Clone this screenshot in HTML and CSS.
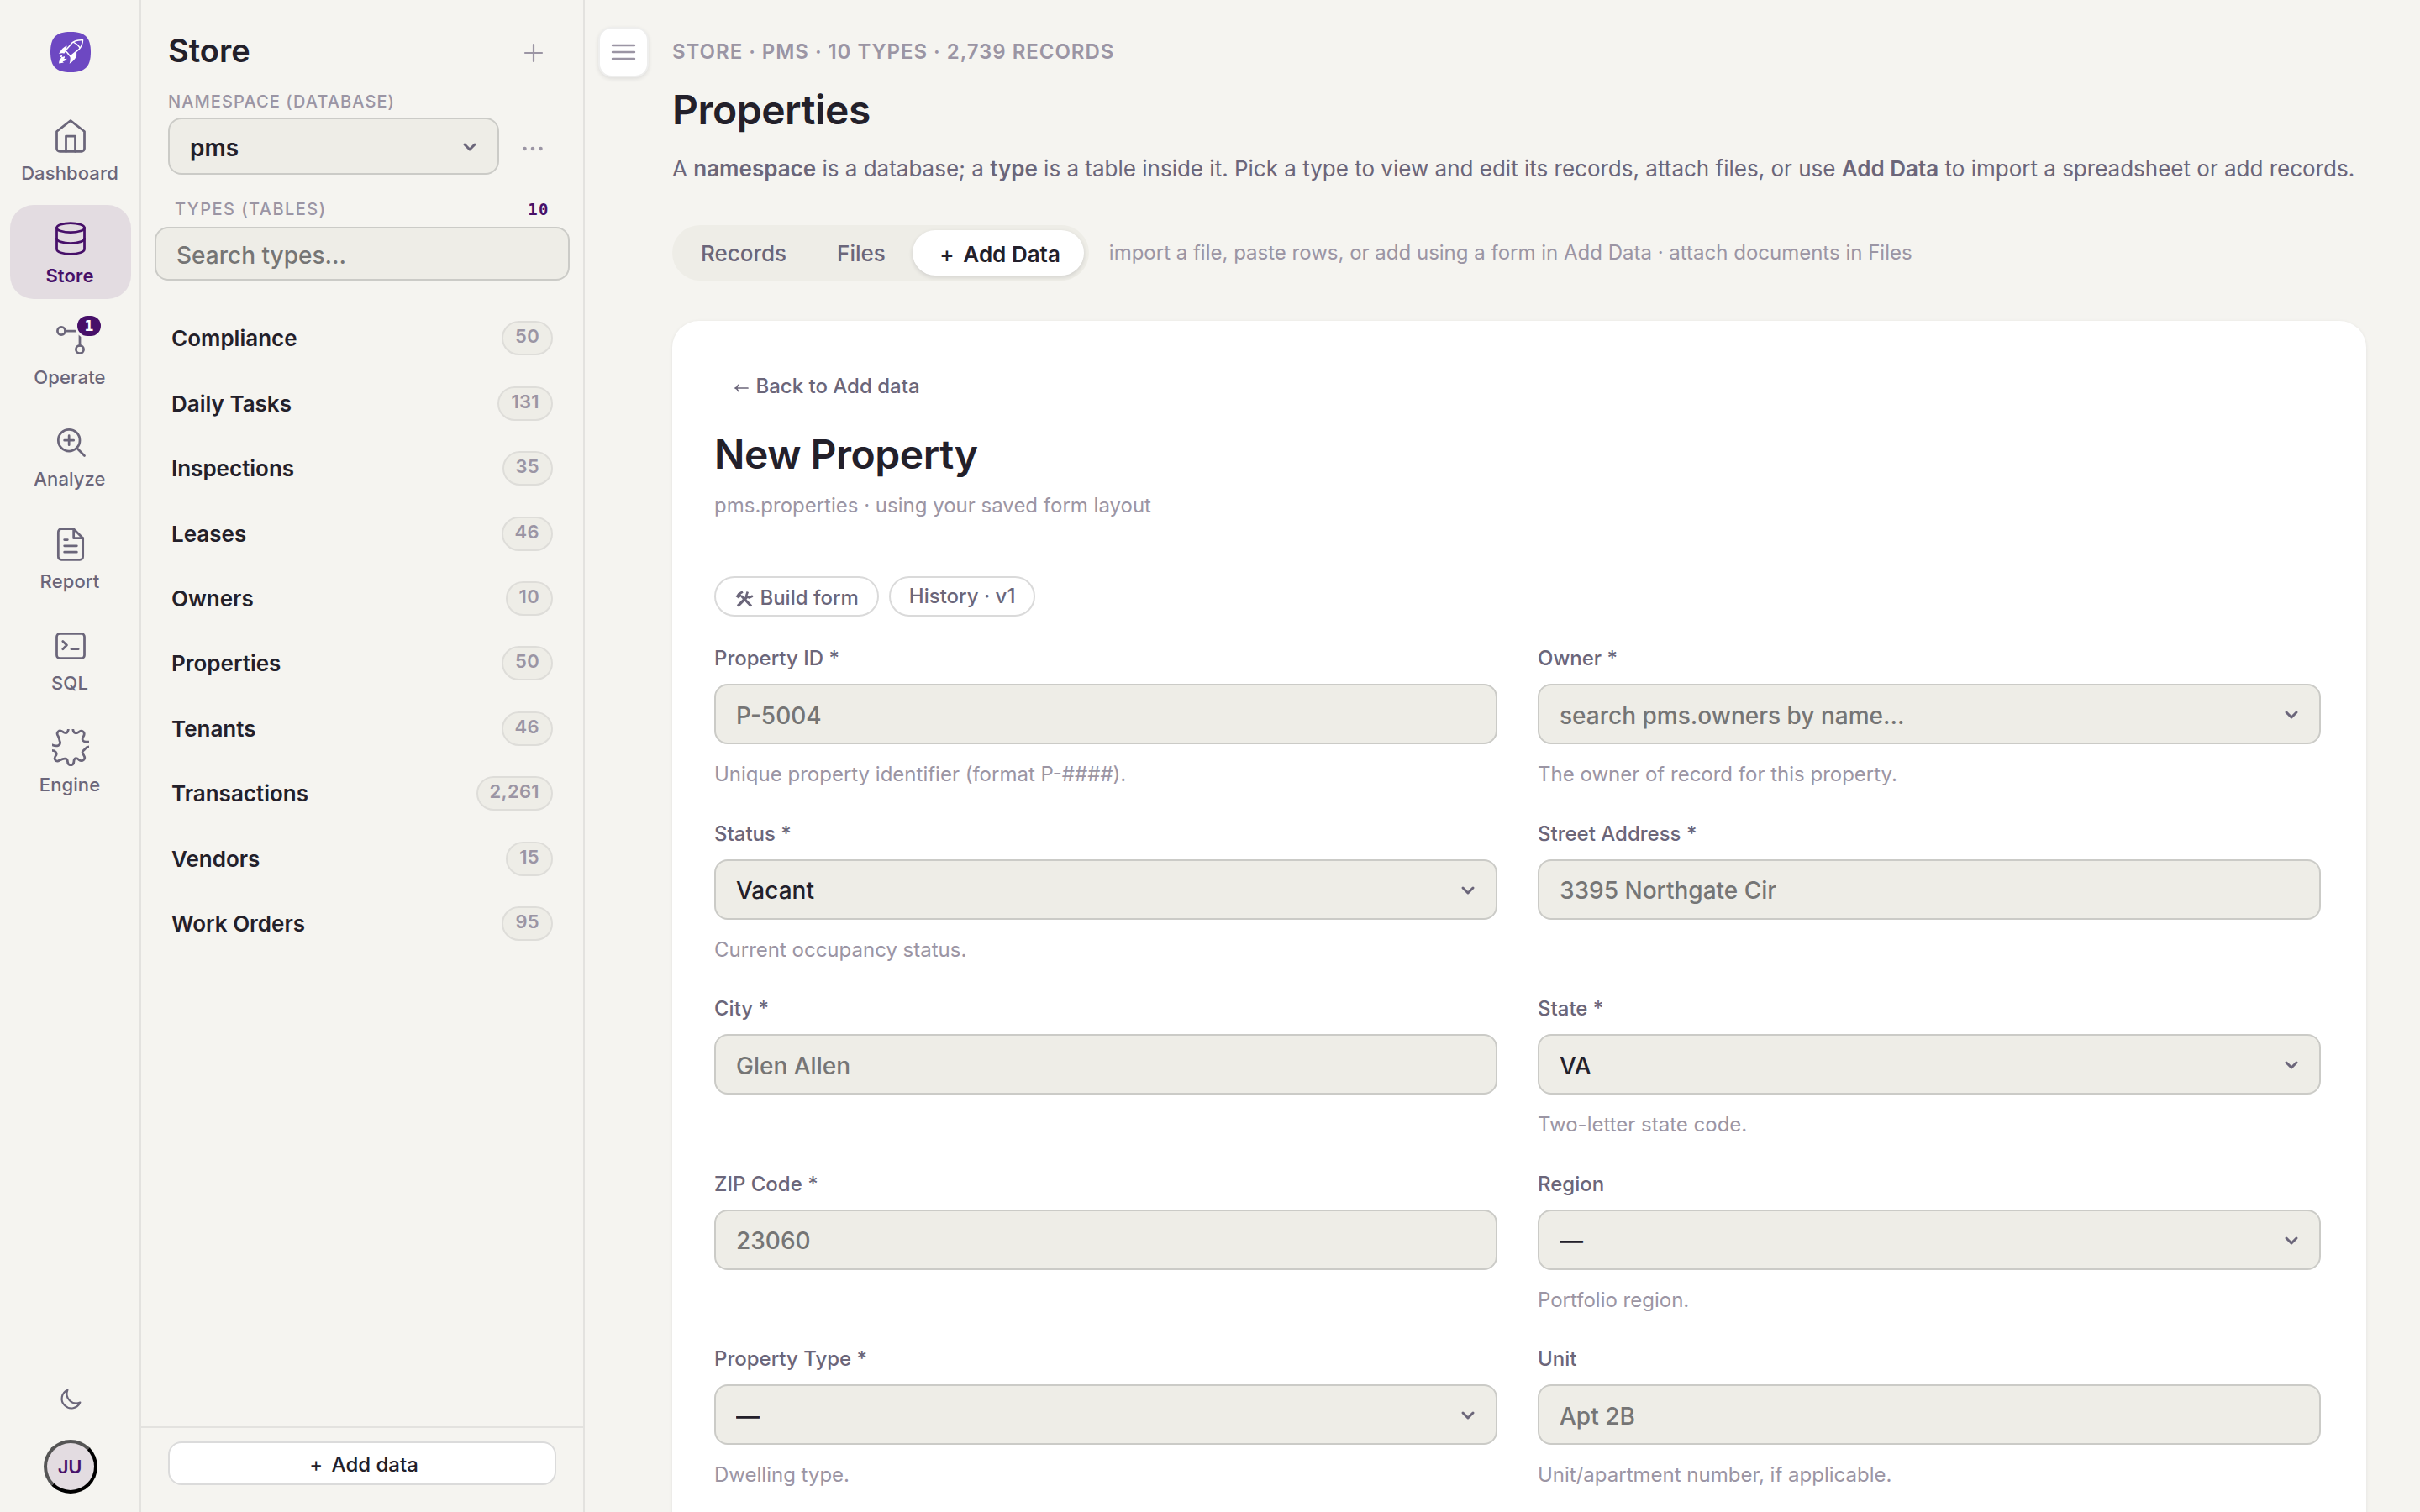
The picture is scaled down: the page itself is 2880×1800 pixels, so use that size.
FILE: index.html
```html
<!DOCTYPE html>
<html lang="en">
<head>
<meta charset="UTF-8">
<meta name="viewport" content="width=device-width, initial-scale=1">
<title>Store · Properties</title>
<link rel="stylesheet" href="styles.css">
</head>
<body>
<div class="app">

  <!-- icon rail -->
  <nav class="rail">
    <svg class="logo" viewBox="0 0 142 142">
      <path fill="#6d48c2" d="M71 0C122 0 142 20 142 71S122 142 71 142 0 122 0 71 20 0 71 0z"/>
      <path fill="none" stroke="#fff" stroke-width="4.5" stroke-linejoin="round" d="M114 29C98 28 86 31 78 37L53 66l17 20 30-24c9-9 13-19 14-33zM80 36c8 4 20 12 24 21"/>
      <path fill="#fff" d="M58 49c-10 3-21 14-28 28 7-3 13-3 18-1l7-9zM92 70l-23 16c2 9 1 16-2 26 11-6 21-17 25-27zM44 79c-5 2-9 5-10 9l5 2c-6 6-9 12-9 21 7-1 12-2 17-3l-4-4c8-1 13-5 15-10-5 1-8 1-10 0 3-3 3-6 1-8-3 2-6 2-9 1z"/>
    </svg>
    <a class="nav-item">
      <svg class="icon" viewBox="0 0 24 24"><path d="M3 9l9-7 9 7v11a2 2 0 0 1-2 2H5a2 2 0 0 1-2-2z"/><path d="M9 22V12h6v10"/></svg>
      <span>Dashboard</span>
    </a>
    <a class="nav-item active">
      <svg class="icon" viewBox="0 0 24 24"><ellipse cx="12" cy="5" rx="9" ry="3"/><path d="M21 12c0 1.66-4 3-9 3s-9-1.34-9-3"/><path d="M3 5v14c0 1.66 4 3 9 3s9-1.34 9-3V5"/></svg>
      <span>Store</span>
    </a>
    <a class="nav-item">
      <svg class="icon" viewBox="0 0 24 24"><circle cx="6" cy="6" r="2.5"/><circle cx="18" cy="18" r="2.5"/><path d="M8.5 6H16a2 2 0 0 1 2 2v7.5"/></svg>
      <b class="nav-badge">1</b>
      <span>Operate</span>
    </a>
    <a class="nav-item">
      <svg class="icon" viewBox="0 0 24 24"><circle cx="11" cy="11" r="7"/><path d="M21 21l-5-5M11 8v6M8 11h6"/></svg>
      <span>Analyze</span>
    </a>
    <a class="nav-item">
      <svg class="icon" viewBox="0 0 24 24"><path d="M14 2H6a2 2 0 0 0-2 2v16a2 2 0 0 0 2 2h12a2 2 0 0 0 2-2V8z"/><path d="M14 2v6h6M16 13H8M16 17H8M10 9H8"/></svg>
      <span>Report</span>
    </a>
    <a class="nav-item">
      <svg class="icon" viewBox="0 0 24 24"><rect x="3" y="4" width="18" height="16" rx="2"/><path d="M7 9l2.5 2.5L7 14M12.5 14H17"/></svg>
      <span>SQL</span>
    </a>
    <a class="nav-item">
      <svg class="icon" viewBox="0 0 24 24"><path d="M10.6-.5C10.4 3 8.6 3 6.9 1.7 4.6 0 2.3 2.2 3.9 4.5 4.8 6 4.6 7.2 5.2 8.4 5.6 10.2 3.5 11.8 0 10.2M-.2 13.9C2 13.9 3.4 15.2 2.6 17 .6 19.2 2.4 21.8 5 20.2 8 18.6 10 18.8 10.1 21.3 10.2 24 14 24 14.1 21.3 14.2 18.8 15.6 18.2 17.3 19.8 19.6 21.6 22.2 19.4 20.6 17 19 15 19.6 14.4 21.3 13 22 12 23 11.5 24.5 11.4M24.5 8.2H22C20 8.2 19.2 7 20.1 5.2 22 2.4 19.8 .2 17.4 1.8 15.6 3.2 13.6 3 13.5-.5"/></svg>
      <span>Engine</span>
    </a>
    <div class="rail-foot">
      <svg class="moon" viewBox="0 0 24 24"><path d="M20 14.5A8 8 0 0 1 9.5 4a8 8 0 1 0 10.5 10.5z"/></svg>
      <button class="avatar">JU</button>
    </div>
  </nav>

  <!-- types panel -->
  <aside class="panel">
    <div class="panel-head">
      <h2>Store</h2>
      <svg class="plus" viewBox="0 0 24 24"><path d="M12 2v20M2 12h20"/></svg>
    </div>
    <div class="ns-label">Namespace (database)</div>
    <div class="ns-row">
      <div class="select-wrap ns-select">
        <select><option>pms</option></select>
        <svg class="chev" viewBox="0 0 12 12"><path d="M3 4.5l3 3 3-3"/></svg>
      </div>
      <svg class="dots" viewBox="0 0 24 6"><circle cx="2.5" cy="3" r="2.3"/><circle cx="12" cy="3" r="2.3"/><circle cx="21.5" cy="3" r="2.3"/></svg>
    </div>
    <div class="types-head"><span>Types (tables)</span><b>10</b></div>
    <input class="search" placeholder="Search types…">
    <ul class="types">
      <li>Compliance<span>50</span></li>
      <li>Daily Tasks<span>131</span></li>
      <li>Inspections<span>35</span></li>
      <li>Leases<span>46</span></li>
      <li>Owners<span>10</span></li>
      <li>Properties<span>50</span></li>
      <li>Tenants<span>46</span></li>
      <li>Transactions<span>2,261</span></li>
      <li>Vendors<span>15</span></li>
      <li>Work Orders<span>95</span></li>
    </ul>
    <div class="panel-foot">
      <button class="add-btn"><i class="wide">+</i> Add data</button>
    </div>
  </aside>

  <main class="main">
    <button class="menu-btn">
      <svg viewBox="0 0 32 32"><path d="M3 8h26M3 16h26M3 24h26"/></svg>
    </button>
    <div class="content">
      <div class="eyebrow">Store · pms · 10 types · 2,739 records</div>
      <h1>Properties</h1>
      <p class="desc">A <b>namespace</b> is a database; a <b>type</b> is a table inside it. Pick a type to view and edit its records, attach files, or use <b>Add Data</b> to import a spreadsheet or add records.</p>
      <div class="tab-row">
        <div class="tabs">
          <button>Records</button>
          <button>Files</button>
          <button class="on"><i class="wide">+</i> Add Data</button>
        </div>
        <span class="tab-hint">import a file, paste rows, or add using a form in Add Data · attach documents in Files</span>
      </div>

      <section class="card">
        <a class="back"><svg class="arrow" viewBox="0 0 19 12"><path d="M1 6h15M4.5 2.5C3.8 4.3 2.8 5.4 1 6c1.8.6 2.8 1.7 3.5 3.5"/></svg> Back to Add data</a>
        <h1 class="card-title">New Property</h1>
        <p class="sub">pms.properties · using your saved form layout</p>
        <div class="actions">
          <button class="build"><svg class="tool" viewBox="0 0 24 20">
            <path stroke-width="3.2" d="M8.5 6.5L20 18.5M4 18.5L15.5 7"/>
            <path stroke-width="2.6" d="M2.8 8l2.400-3.800L10 1.500M4 8.500L8 5M15.800 1.500l-1.500 4.400 3.200 2.600 4.300-2"/>
          </svg> Build form</button>
          <button>History · v1</button>
        </div>
        <form class="fields">
          <div class="field">
            <label>Property ID *</label>
            <input placeholder="P-5004">
            <small>Unique property identifier (format P-####).</small>
          </div>
          <div class="field">
            <label>Owner *</label>
            <div class="select-wrap">
              <input placeholder="search pms.owners by name…">
              <svg class="chev" viewBox="0 0 12 12"><path d="M3 4.5l3 3 3-3"/></svg>
            </div>
            <small>The owner of record for this property.</small>
          </div>
          <div class="field">
            <label>Status *</label>
            <div class="select-wrap">
              <select><option>Vacant</option></select>
              <svg class="chev" viewBox="0 0 12 12"><path d="M3 4.5l3 3 3-3"/></svg>
            </div>
            <small>Current occupancy status.</small>
          </div>
          <div class="field">
            <label>Street Address *</label>
            <input placeholder="3395 Northgate Cir">
          </div>
          <div class="field">
            <label>City *</label>
            <input placeholder="Glen Allen">
          </div>
          <div class="field">
            <label>State *</label>
            <div class="select-wrap">
              <select><option>VA</option></select>
              <svg class="chev" viewBox="0 0 12 12"><path d="M3 4.5l3 3 3-3"/></svg>
            </div>
            <small>Two-letter state code.</small>
          </div>
          <div class="field">
            <label>ZIP Code *</label>
            <input placeholder="23060">
          </div>
          <div class="field">
            <label>Region</label>
            <div class="select-wrap">
              <select><option>—</option></select>
              <svg class="chev" viewBox="0 0 12 12"><path d="M3 4.5l3 3 3-3"/></svg>
            </div>
            <small>Portfolio region.</small>
          </div>
          <div class="field">
            <label>Property Type *</label>
            <div class="select-wrap">
              <select><option>—</option></select>
              <svg class="chev" viewBox="0 0 12 12"><path d="M3 4.5l3 3 3-3"/></svg>
            </div>
            <small>Dwelling type.</small>
          </div>
          <div class="field">
            <label>Unit</label>
            <input placeholder="Apt 2B">
            <small>Unit/apartment number, if applicable.</small>
          </div>
        </form>
      </section>
    </div>
  </main>
</div>
</body>
</html>
```
FILE: styles.css
```css
:root {
  --bg: #f5f4f0;
  --sunken: #eeede7;
  --line: #e3e2df;
  --line-strong: #cbcbc7;
  --ink: #23202a;
  --muted: #6b667a;
  --faint: #9b95a4;
  --brand: #471069;
  --brand-soft: #e3dce1;
}
* { box-sizing: border-box; margin: 0; padding: 0; }
body {
  background: var(--bg);
  color: var(--ink);
  font-family: Inter, "Liberation Sans", sans-serif;
  font-size: 26px;
  overflow: hidden;
}
button, input, select { font: inherit; color: inherit; }
i { font-style: normal; }
svg { fill: none; stroke: currentColor; stroke-linecap: round; stroke-linejoin: round; flex: none; }
.app { display: flex; height: 100vh; overflow: hidden; }

/* rail */
.rail {
  width: 168px;
  flex: none;
  border-right: 2px solid var(--line);
  display: flex;
  flex-direction: column;
  padding: 38px 10px 22px 12px;
  color: var(--muted);
}
.logo { width: 48px; height: 48px; stroke: none; margin: 0 0 36.4px 48px; }
.nav-item {
  position: relative;
  height: 112px;
  margin-bottom: 9.3px;
  padding-top: 18px;
  border-radius: 28px;
  display: flex;
  flex-direction: column;
  align-items: center;
  gap: 6px;
  font-size: 22px;
  line-height: 32px;
  font-weight: 500;
  letter-spacing: .005em;
}
.nav-item span { margin-right: 2px; }
.nav-item.active { background: var(--brand-soft); color: var(--brand); font-weight: 600; }
.icon { width: 44px; height: 44px; stroke-width: 1.5; }
.nav-badge {
  position: absolute;
  left: 80px;
  top: 11px;
  width: 28px;
  height: 24px;
  border-radius: 12px;
  background: var(--brand);
  color: #fff;
  box-shadow: 0 0 0 3px var(--bg);
  font: 700 18px/24px "DejaVu Sans Mono", monospace;
  text-align: center;
}
.rail-foot { margin-top: auto; display: flex; flex-direction: column; align-items: center; gap: 31px; }
.moon { width: 34px; height: 34px; stroke-width: 1.5; }
.avatar {
  width: 64px;
  height: 64px;
  padding-right: 2px;
  border-radius: 50%;
  border: 4px solid;
  border-color: #555 #000 #000 #555;
  background: var(--brand-soft);
  color: var(--brand);
  font-size: 22px;
  font-weight: 600;
  letter-spacing: -.01em;
}

/* types panel */
.panel {
  width: 528px;
  flex: none;
  border-right: 2px solid var(--line);
  display: flex;
  flex-direction: column;
}
.panel-head { display: flex; justify-content: space-between; align-items: center; height: 48px; margin: 36px 48px 0 32px; }
.panel-head h2 { font-size: 38px; font-weight: 600; line-height: 48px; }
.plus { width: 24px; height: 24px; stroke-width: 2.2; color: var(--faint); margin: 6px -1px 0 0; }
.ns-label, .types-head {
  font-size: 20px;
  line-height: 30px;
  font-weight: 500;
  letter-spacing: .055em;
  text-transform: uppercase;
  color: var(--faint);
}
.ns-label { margin: 22px 0 4px 32px; }
.ns-row { display: flex; align-items: center; gap: 28px; margin-left: 32px; }
.ns-select { width: 394px; }
.ns-select select { height: 68px; padding-top: 4px; font-weight: 600; }
.dots { width: 24px; height: 6px; margin-top: 6px; fill: var(--faint); stroke: none; }
.types-head { display: flex; justify-content: space-between; margin: 26px 40px 6px 40px; letter-spacing: .073em; }
.types-head b { font: 700 19px/30px "DejaVu Sans Mono", monospace; color: var(--brand); }
input, select {
  display: block;
  width: 100%;
  height: 72px;
  padding: 3px 24px 0;
  border: 2px solid var(--line-strong);
  border-radius: 16px;
  background: var(--sunken);
  font-size: 28px;
  font-weight: 500;
  appearance: none;
  outline: none;
}
input::placeholder { color: #757575; }
.search { width: 494px; height: 64px; margin-left: 16px; }
.select-wrap { position: relative; }
.chev {
  position: absolute;
  right: 23px;
  top: 50%;
  width: 24px;
  height: 24px;
  margin-top: -11px;
  stroke-width: 1.5;
  color: var(--muted);
}
.types { list-style: none; margin: 30px 36px 0; }
.types li {
  display: flex;
  align-items: center;
  justify-content: space-between;
  height: 77.45px;
  font-size: 26px;
  font-weight: 600;
}
.types span {
  height: 41px;
  padding: 0 14px;
  border: 2px solid #deddd9;
  border-radius: 21px;
  background: var(--sunken);
  color: var(--faint);
  font-size: 22px;
  line-height: 33px;
  font-weight: 600;
  letter-spacing: .015em;
}
.panel-foot { margin-top: auto; border-top: 2px solid var(--line); height: 102px; padding: 16px 32px 0; }
.add-btn {
  width: 462px;
  height: 52px;
  padding-top: 3px;
  border: 2px solid #dbdbdb;
  border-radius: 16px;
  background: #fff;
  font-size: 24px;
  font-weight: 500;
  line-height: 45px;
}
.wide { display: inline-block; width: 1em; text-align: center; font-weight: 400; }

/* main */
.main { flex: 1; display: flex; align-items: flex-start; min-width: 0; }
.menu-btn {
  flex: none;
  width: 60px;
  height: 60px;
  margin: 32px 28px 0 16px;
  display: grid;
  place-items: center;
  border: 2px solid #eeeeed;
  border-radius: 16px;
  background: #fff;
  color: var(--faint);
  box-shadow: 0 2px 5px rgba(30, 25, 40, .1);
}
.menu-btn svg { width: 32px; height: 32px; stroke-width: 2.4; }
.content { width: 2016px; flex: none; padding-top: 44px; }
.eyebrow {
  font-size: 24px;
  line-height: 36px;
  font-weight: 600;
  letter-spacing: .04em;
  text-transform: uppercase;
  color: var(--faint);
}
h1 { font-size: 48px; line-height: 58px; font-weight: 600; letter-spacing: -.01em; margin-top: 22px; }
.desc { margin-top: 21px; font-size: 26px; line-height: 40px; color: var(--muted); white-space: nowrap; }
.desc b { font-weight: 600; }
.tab-row { display: flex; align-items: center; gap: 24px; margin-top: 47px; }
.tabs { display: flex; gap: 4px; height: 66px; padding: 6px; border-radius: 33px; background: var(--sunken); }
.tabs button {
  padding: 0 28px;
  border: 0;
  border-radius: 27px;
  background: none;
  color: var(--muted);
  font-size: 26px;
  font-weight: 500;
}
.tabs .on { padding-top: 2px; background: #fff; color: var(--ink); font-weight: 600; box-shadow: 0 2px 5px rgba(30, 25, 40, .14); }
.on .wide { font-weight: 500; }
.tab-hint { padding-bottom: 2px; font-size: 24px; color: var(--faint); white-space: nowrap; }

.card {
  margin-top: 48px;
  height: 1500px;
  padding: 60px 54px 0 50px;
  border-radius: 32px;
  background: #fff;
  box-shadow: 0 1px 4px rgba(30, 25, 40, .08);
}
.back { display: block; padding-left: 24px; font-size: 24px; line-height: 36px; font-weight: 500; color: var(--muted); }
.arrow { width: 19px; height: 12px; stroke-width: 1.7; }
.card-title { margin-top: 34px; }
.sub { margin-top: 14px; font-size: 24px; line-height: 36px; color: var(--faint); }
.actions { display: flex; gap: 12px; margin-top: 66px; }
.actions button {
  height: 48px;
  padding: 0 22px;
  border: 2px solid #dadada;
  border-radius: 24px;
  background: #fff;
  color: var(--muted);
  font-size: 24px;
  line-height: 40px;
  font-weight: 500;
  white-space: nowrap;
}
.actions .build { padding-top: 3px; }
.tool { width: 24px; height: 20px; vertical-align: -3px; stroke-linecap: butt; }
.fields { display: grid; grid-template-columns: 1fr 1fr; grid-auto-rows: 208.5px; column-gap: 48px; margin-top: 32px; }
.field label { display: block; margin-bottom: 12px; font-size: 24px; line-height: 36px; font-weight: 500; color: var(--muted); }
.field small { display: block; margin-top: 18px; font-size: 24px; line-height: 36px; color: var(--faint); }
```
